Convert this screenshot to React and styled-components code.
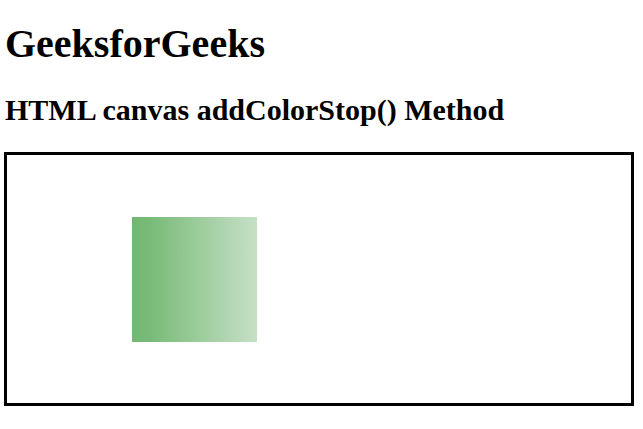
import React from "react";
import styled, { createGlobalStyle } from "styled-components";

const Global = createGlobalStyle`
  html, body { margin: 0; padding: 0; background: #fff; }
  body { font-family: "Liberation Serif", "Times New Roman", serif; color: #000; }
`;

const Page = styled.div`
  padding: 0 0 0 4px;
  display: flex;
  flex-direction: column;
  align-items: flex-start;
`;

const Title = styled.h1`
  margin: 21px 0 0 1px;
  font-size: 40px;
  line-height: 46px;
  font-weight: bold;
`;

const Subtitle = styled.h2`
  margin: 26px 0 0 1px;
  font-size: 30px;
  line-height: 34px;
  font-weight: bold;
`;

const CanvasBox = styled.div`
  margin-top: 25px;
  box-sizing: border-box;
  width: 630px;
  height: 254px;
  border: 3px solid #000;
  padding: 62px 0 0 125px;
`;

const GradientSquare = styled.div`
  width: 125px;
  height: 125px;
  background: linear-gradient(to right, #72b872 0%, #76ba76 12%, #c6e0c6 100%);
`;

export default function App() {
  return (
    <>
      <Global />
      <Page>
        <Title>GeeksforGeeks</Title>
        <Subtitle>HTML canvas addColorStop() Method</Subtitle>
        <CanvasBox>
          <GradientSquare />
        </CanvasBox>
      </Page>
    </>
  );
}
